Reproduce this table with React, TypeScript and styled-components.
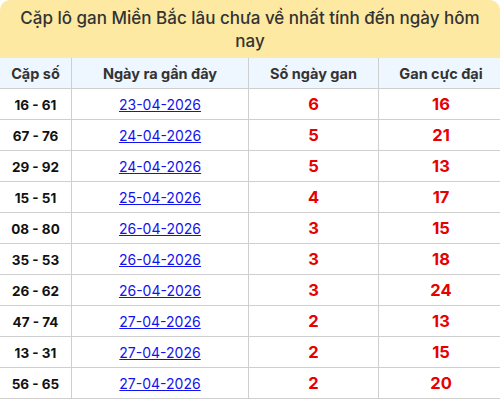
import React from 'react';
import styled, { createGlobalStyle } from 'styled-components';

const GlobalStyle = createGlobalStyle`
    html, body {
        margin: 0;
        padding: 0;
        background: #fff;
    }
    body {
        font-family: Inter, "Noto Sans", sans-serif;
    }
`;

interface Row {
    pair: string;
    date: string;
    days: number;
    max: number;
}

const rows: Row[] = [
    { pair: '16 - 61', date: '23-04-2026', days: 6, max: 16 },
    { pair: '67 - 76', date: '24-04-2026', days: 5, max: 21 },
    { pair: '29 - 92', date: '24-04-2026', days: 5, max: 13 },
    { pair: '15 - 51', date: '25-04-2026', days: 4, max: 17 },
    { pair: '08 - 80', date: '26-04-2026', days: 3, max: 15 },
    { pair: '35 - 53', date: '26-04-2026', days: 3, max: 18 },
    { pair: '26 - 62', date: '26-04-2026', days: 3, max: 24 },
    { pair: '47 - 74', date: '27-04-2026', days: 2, max: 13 },
    { pair: '13 - 31', date: '27-04-2026', days: 2, max: 15 },
    { pair: '56 - 65', date: '27-04-2026', days: 2, max: 20 },
];

const Wrapper = styled.div`
    width: 500px;
`;
const Title = styled.h2`
    margin: 0;
    padding: 7px 14px 6px;
    background-color: #fde9a2;
    border-radius: 10px 10px 0 0;
    color: #333;
    font-size: 17px;
    font-weight: 500;
    line-height: 22.5px;
    text-align: center;
`;
const Table = styled.table`
    width: 500px;
    border-collapse: collapse;
    table-layout: fixed;
`;
const HeadCell = styled.th<{ $w: number }>`
    width: ${(p) => p.$w}px;
    height: 30px;
    padding: 0;
    background-color: #eef6ff;
    border: 1px solid #cfcfcf;
    border-top: none;
    color: #333;
    font-size: 14.5px;
    font-weight: 700;
    text-align: center;
    &:first-child {
        border-left: none;
    }
`;
const Cell = styled.td`
    height: 30px;
    padding: 0;
    border: 1px solid #cfcfcf;
    text-align: center;
    &:first-child {
        border-left: none;
    }
`;
const Pair = styled.span`
    color: #111;
    font-size: 13.5px;
    font-weight: 700;
`;
const DateLink = styled.a`
    color: #1212ee;
    font-size: 14px;
    text-decoration: underline;
`;
const Num = styled.span`
    color: #e60000;
    font-size: 16.5px;
    font-weight: 700;
`;

const App: React.FC = () => (
    <Wrapper>
        <GlobalStyle />
        <Title>Cặp lô gan Miền Bắc lâu chưa về nhất tính đến ngày hôm nay</Title>
        <Table>
            <thead>
                <tr>
                    <HeadCell $w={71}>Cặp số</HeadCell>
                    <HeadCell $w={176}>Ngày ra gần đây</HeadCell>
                    <HeadCell $w={129}>Số ngày gan</HeadCell>
                    <HeadCell $w={124}>Gan cực đại</HeadCell>
                </tr>
            </thead>
            <tbody>
                {rows.map((r) => (
                    <tr key={r.pair}>
                        <Cell>
                            <Pair>{r.pair}</Pair>
                        </Cell>
                        <Cell>
                            <DateLink href="#">{r.date}</DateLink>
                        </Cell>
                        <Cell>
                            <Num>{r.days}</Num>
                        </Cell>
                        <Cell>
                            <Num>{r.max}</Num>
                        </Cell>
                    </tr>
                ))}
            </tbody>
        </Table>
    </Wrapper>
);

export default App;
